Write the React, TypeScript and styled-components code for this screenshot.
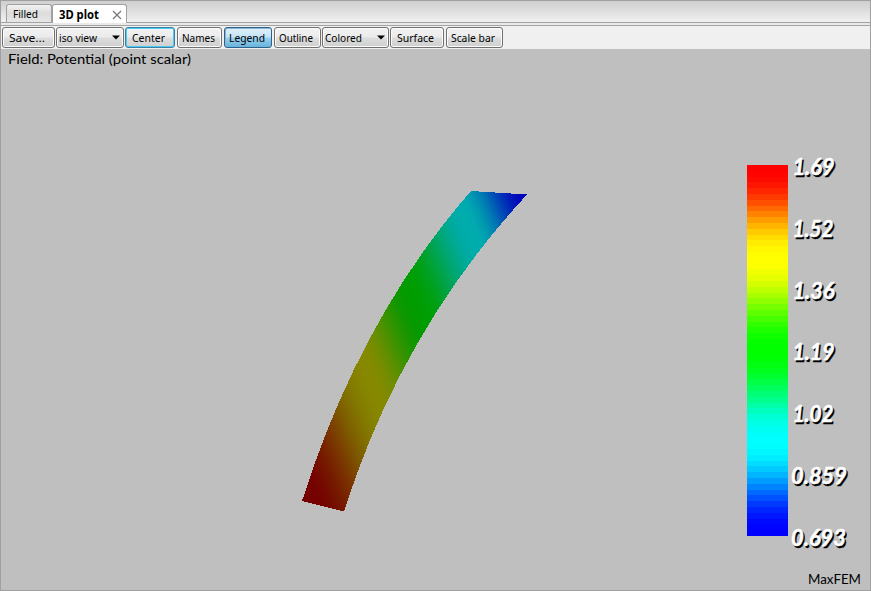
import React from 'react';
import styled, { createGlobalStyle, css } from 'styled-components';

const GlobalStyle = createGlobalStyle`
  html, body { margin: 0; padding: 0; }
  body { background: #bfbfbf; overflow: hidden; }
  * { box-sizing: border-box; }
`;

const Window = styled.div`
  width: 871px;
  height: 591px;
  display: flex;
  flex-direction: column;
  background: #bfbfbf;
  border: 1px solid #a0a0a0;
  font-family: 'Noto Sans', sans-serif;
  font-size: 11px;
  color: #000;
`;

const TabStrip = styled.div`
  height: 22px;
  flex: none;
  display: flex;
  align-items: flex-end;
  padding-left: 5px;
  background: linear-gradient(#cfcfcf, #f0f0f0);
  border-bottom: 1px solid #a3a3a3;
`;

const Tab = styled.div<{ $active?: boolean }>`
  display: flex;
  align-items: center;
  white-space: nowrap;
  border: 1px solid #a0a0a0;
  border-bottom: 0;
  border-radius: 3px 3px 0 0;
  ${p => p.$active
    ? css`
        width: 75px;
        height: 19px;
        margin-bottom: -1px;
        padding-left: 6px;
        background: #fff;
        font-weight: 700;
      `
    : css`
        width: 46px;
        height: 18px;
        padding-left: 6px;
        background: linear-gradient(#f3f3f3, #dcdcdc 45%, #e6e6e6);
      `}
`;

const CloseIcon = styled.svg`
  margin-left: auto;
  margin-right: 4px;
  margin-top: 2px;
`;

const Divider = styled.div`
  height: 3px;
  flex: none;
  background: #e9e9e9;
  border-bottom: 1px solid #a3a3a3;
`;

const Toolbar = styled.div`
  height: 23px;
  flex: none;
  display: flex;
  align-items: flex-start;
  padding: 1px 0 0 1px;
  background: #f0f0f0;
`;

const Button = styled.div<{ $w: number; $tone?: 'focus' | 'pressed'; $select?: boolean; $gap?: number }>`
  width: ${p => p.$w}px;
  height: 21px;
  margin-right: ${p => p.$gap ?? 2}px;
  display: flex;
  align-items: center;
  justify-content: ${p => (p.$select ? 'space-between' : 'center')};
  padding: ${p => (p.$select ? '0 3px 0 2px' : '0 3px 0 0')};
  border: 1px solid #707070;
  border-radius: 3px;
  box-shadow: inset 0 0 0 1px #fcfcfc;
  background: linear-gradient(#f2f2f2, #ebebeb 48%, #dddddd 52%, #cfcfcf);
  white-space: nowrap;
  ${p => p.$tone === 'focus' && css`
    border-color: #3c7f9f;
    box-shadow: inset 0 0 0 1px #48cdf4;
  `}
  ${p => p.$tone === 'pressed' && css`
    border-color: #2c628b;
    box-shadow: inset 1px 1px 0 #8fb6cc;
    background: linear-gradient(#e0f1fa, #c3e3f5 48%, #98d0ee 52%, #68b3db);
  `}
`;

const Viewport = styled.div`
  flex: 1;
  position: relative;
  background: #bfbfbf;
`;

const Scene = styled.svg`
  position: absolute;
  left: -1px;
  top: -49px;
`;

const Overlay = styled.text`
  font-family: Lato, sans-serif;
  font-size: 12.5px;
  fill: #000;
`;

const ScaleLabel = styled.text<{ $shadow?: boolean }>`
  font-family: Lato, sans-serif;
  font-size: 22px;
  font-weight: 700;
  font-style: italic;
  fill: ${p => (p.$shadow ? '#000' : '#fff')};
  stroke: ${p => (p.$shadow ? '#000' : '#fff')};
  stroke-width: 0.5px;
`;

/** Eased rainbow: 0 red, 1 yellow, 2 green, 3 cyan, 4 blue. */
function rainbow(h: number, brightness = 1) {
  const x = Math.max(0, Math.min(4, h));
  const ramp = (v: number) => {
    const c = Math.max(0, Math.min(1, v));
    return Math.round(255 * brightness * 0.5 * (1 - Math.cos(Math.PI * c)));
  };
  return `rgb(${ramp(2 - x)},${ramp(x < 2 ? x : 4 - x)},${ramp(x - 2)})`;
}

const BANDS = 64;
const bands = Array.from({ length: BANDS }, (_, i) => rainbow((i / (BANDS - 1)) * 4));
const bandEdge = (i: number) => Math.round(165 + (371 * i) / BANDS);

const anchors = [
  [0, 0, 0.46], [0.04, 0.05, 0.46], [0.108, 0.3, 0.46], [0.326, 1, 0.53],
  [0.555, 2, 0.61], [0.795, 3, 0.68], [1, 4, 0.74],
];

const ribbonStops = anchors.slice(0, -1).flatMap(([t0, h0, b0], k) => {
  const [t1, h1, b1] = anchors[k + 1];
  return Array.from({ length: 9 }, (_, i) => {
    const f = i / 8;
    return { offset: t0 + (t1 - t0) * f, color: rainbow(h0 + (h1 - h0) * f, b0 + (b1 - b0) * f) };
  });
});

const labels = [
  { text: '1.69', x: 792.5, y: 175, w: 42 },
  { text: '1.52', x: 792.5, y: 237, w: 41 },
  { text: '1.36', x: 792.5, y: 299, w: 42 },
  { text: '1.19', x: 792.5, y: 360, w: 42 },
  { text: '1.02', x: 792.5, y: 422, w: 41 },
  { text: '0.859', x: 791, y: 484, w: 56 },
  { text: '0.693', x: 791, y: 546, w: 55 },
];

const Arrow = () => (
  <svg width="8" height="5" viewBox="0 0 8 5"><path d="M0 .5h8L4 4.5z" fill="#000" /></svg>
);

const Label = ({ children, w, bold }: { children: string; w: number; bold?: boolean }) => (
  <svg width={w} height="15" overflow="visible">
    <text x="0" y="12" fontSize="11.5" fontWeight={bold ? 700 : 400} textLength={w} lengthAdjust="spacingAndGlyphs">{children}</text>
  </svg>
);

export default function App() {
  return (
    <>
      <GlobalStyle />
      <Window>
        <TabStrip>
          <Tab><Label w={25}>Filled</Label></Tab>
          <Tab $active>
            <Label w={40} bold>3D plot</Label>
            <CloseIcon width="10" height="10" viewBox="0 0 10 10">
              <path d="M1 1l8 8M9 1L1 9" stroke="#777" strokeWidth="1.2" fill="none" />
            </CloseIcon>
          </Tab>
        </TabStrip>
        <Divider />
        <Toolbar>
          <Button $w={53} $gap={1}><Label w={36}>Save...</Label></Button>
          <Button $w={68} $gap={1} $select><Label w={38}>iso view</Label><Arrow /></Button>
          <Button $w={50} $tone="focus"><Label w={33}>Center</Label></Button>
          <Button $w={45}><Label w={33}>Names</Label></Button>
          <Button $w={48} $tone="pressed"><Label w={36}>Legend</Label></Button>
          <Button $w={47} $gap={1}><Label w={34}>Outline</Label></Button>
          <Button $w={67} $gap={1} $select><Label w={37}>Colored</Label><Arrow /></Button>
          <Button $w={54}><Label w={37}>Surface</Label></Button>
          <Button $w={57}><Label w={44}>Scale bar</Label></Button>
        </Toolbar>
        <Viewport>
          <Scene width="870" height="590" viewBox="0 0 870 590">
            <defs>
              <linearGradient id="potential" gradientUnits="userSpaceOnUse" x1="302" y1="501" x2="602" y2="376">
                {ribbonStops.map((s, i) => <stop key={i} offset={s.offset} stopColor={s.color} />)}
              </linearGradient>
            </defs>
            <path
              d="M471 191L527 194.500Q401.500 330 344 511.500L302 501Q360 318 471 191Z"
              fill="url(#potential)"
              shapeRendering="crispEdges"
            />
            {bands.map((c, i) => (
              <rect key={i} x="747" y={bandEdge(i)} width="41" height={bandEdge(i + 1) - bandEdge(i)} fill={c} />
            ))}
            <Overlay x="8" y="64" textLength="183" lengthAdjust="spacingAndGlyphs">Field: Potential (point scalar)</Overlay>
            <Overlay x="808" y="584" textLength="53" lengthAdjust="spacingAndGlyphs">MaxFEM</Overlay>
            {labels.map(l => (
              <g key={l.text}>
                <ScaleLabel $shadow x={l.x + 1.5} y={l.y + 1.5} textLength={l.w} lengthAdjust="spacingAndGlyphs" aria-hidden="true">{l.text}</ScaleLabel>
                <ScaleLabel x={l.x} y={l.y} textLength={l.w} lengthAdjust="spacingAndGlyphs">{l.text}</ScaleLabel>
              </g>
            ))}
          </Scene>
        </Viewport>
      </Window>
    </>
  );
}
